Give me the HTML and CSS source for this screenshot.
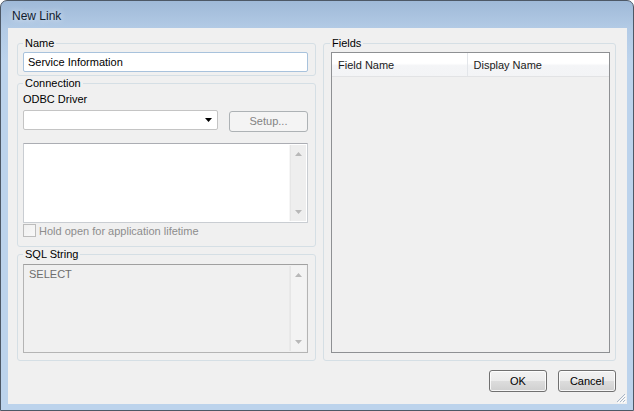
FILE: index.html
```html
<!DOCTYPE html>
<html>
<head>
<meta charset="utf-8">
<link rel="stylesheet" href="styles.css">
</head>
<body>
<div class="window">
  <div class="titlebar"><span class="title">New Link</span></div>
  <div class="client">
    <div class="columns">
      <div class="leftcol">
        <fieldset class="group name-group">
          <legend>Name</legend>
          <div class="textbox">Service Information</div>
        </fieldset>
        <fieldset class="group conn-group">
          <legend>Connection</legend>
          <div class="label">ODBC Driver</div>
          <div class="driver-row">
            <div class="combo">
              <svg class="combo-arrow" width="7" height="4" viewBox="0 0 7 4"><path d="M0 0H7L3.5 4Z" fill="#000"/></svg>
            </div>
            <div class="btn btn-disabled setup">Setup...</div>
          </div>
          <div class="listbox">
            <div class="scrollbar">
              <svg width="7" height="4" viewBox="0 0 7 4"><path d="M3.5 0L7 4H0Z" fill="#b8b8b8"/></svg>
              <svg width="7" height="4" viewBox="0 0 7 4"><path d="M0 0H7L3.5 4Z" fill="#b8b8b8"/></svg>
            </div>
          </div>
          <div class="check">
            <span class="checkbox"></span>
            <span class="check-label">Hold open for application lifetime</span>
          </div>
        </fieldset>
        <fieldset class="group sql-group">
          <legend>SQL String</legend>
          <div class="sqlbox">
            <div class="sql-text">SELECT</div>
            <div class="scrollbar">
              <svg width="7" height="4" viewBox="0 0 7 4"><path d="M3.5 0L7 4H0Z" fill="#b8b8b8"/></svg>
              <svg width="7" height="4" viewBox="0 0 7 4"><path d="M0 0H7L3.5 4Z" fill="#b8b8b8"/></svg>
            </div>
          </div>
        </fieldset>
      </div>
      <fieldset class="group fields-group">
        <legend>Fields</legend>
        <div class="listview">
          <div class="lv-header">
            <div class="lv-col lv-col1">Field Name</div>
            <div class="lv-col lv-col2">Display Name</div>
            <div class="lv-col lv-rest"></div>
          </div>
        </div>
      </fieldset>
    </div>
    <div class="buttons">
      <div class="btn">OK</div>
      <div class="btn">Cancel</div>
    </div>
  </div>
  <svg class="grip" width="11" height="11" viewBox="0 0 11 11">
    <path d="M10 2L2 10M10 5L5 10M10 8L8 10" stroke="#a9b6c6" stroke-width="1"/>
    <path d="M11 3L3 11M11 6L6 11M11 9L9 11" stroke="#ffffff" stroke-width="1"/>
  </svg>
</div>
</body>
</html>
```

FILE: styles.css
```css
* { box-sizing: border-box; }
html, body { margin: 0; padding: 0; }
body {
  width: 634px;
  height: 411px;
  background: #ffffff;
  font-family: "Liberation Sans", Arial, sans-serif;
  font-size: 11px;
  line-height: 13px;
  color: #000;
  overflow: hidden;
}
.window {
  position: relative;
  width: 634px;
  height: 411px;
  border: 1px solid #4d5866;
  border-radius: 7px 7px 0 0;
  background: linear-gradient(#9fb9d8 0px, #b3cbe6 28px, #bcd3ec 60px, #bcd3ec 100%);
  padding: 0 6px 6px 7px;
  display: flex;
  flex-direction: column;
}
.titlebar {
  height: 27px;
  display: flex;
  align-items: center;
  padding-left: 4px;
  padding-top: 4px;
}
.title {
  font-size: 12px;
  color: #10202f;
  text-shadow: 0 0 6px rgba(255,255,255,0.9);
}
.client {
  width: 619px;
  height: 376px;
  background: #f0f0f0;
  padding: 9px 11px 12px 9px;
  display: flex;
  flex-direction: column;
}
.columns {
  display: flex;
  gap: 7px;
  height: 324px;
}
.leftcol {
  width: 299px;
  display: flex;
  flex-direction: column;
  gap: 1px;
}
.group {
  margin: 0;
  border: 1px solid #d5dfe5;
  border-radius: 3px;
  min-width: 0;
}
.group legend {
  padding: 0 2px;
  line-height: 13px;
  color: #000;
}
.name-group { padding: 2px 7px 3px 5px; }
.conn-group { padding: 3px 7px 9px 5px; }
.sql-group { padding: 3px 7px 7px 5px; }
.fields-group {
  width: 293px;
  padding: 2px 5px 7px 7px;
}
.fields-group legend { margin-left: -1px; }

.textbox {
  height: 20px;
  border: 1px solid #a8c2dc;
  border-radius: 2px;
  background: #fff;
  padding: 3px 4px;
}
.label { height: 13px; margin-bottom: 4px; }
.driver-row {
  display: flex;
  gap: 11px;
  height: 22px;
  align-items: flex-start;
}
.combo {
  width: 195px;
  height: 20px;
  border: 1px solid #c4c4c4;
  border-radius: 2px;
  background: #fff;
  display: flex;
  align-items: center;
  justify-content: flex-end;
  padding-right: 5px;
}
.btn {
  width: 58px;
  height: 22px;
  border: 1px solid #707070;
  border-radius: 3px;
  background: linear-gradient(#f2f2f2 0%, #ebebeb 50%, #dddddd 50%, #cfcfcf 100%);
  box-shadow: inset 0 0 0 1px rgba(255,255,255,0.8);
  display: flex;
  align-items: center;
  justify-content: center;
}
.btn-disabled {
  border-color: #adb2b5;
  background: #f4f4f4;
  box-shadow: none;
  color: #838383;
}
.setup {
  width: 79px;
  height: 21px;
  margin-top: 1px;
}
.listbox {
  margin-top: 11px;
  height: 80px;
  border: 1px solid #c9cdd2;
  border-top-color: #abadb3;
  border-radius: 1px;
  background: #fff;
  display: flex;
  justify-content: flex-end;
  padding: 1px;
}
.scrollbar {
  width: 17px;
  background: #eeeeee;
  border-left: 1px solid #f6f6f6;
  box-shadow: inset 1px 0 0 #e6e6e6;
  display: flex;
  flex-direction: column;
  justify-content: space-between;
  align-items: center;
  padding: 7px 0 7px 1px;
}
.check {
  margin-top: 1px;
  height: 13px;
  display: flex;
  align-items: center;
  gap: 3px;
}
.checkbox {
  width: 13px;
  height: 13px;
  border: 1px solid #bcbcbc;
  background: linear-gradient(135deg, #f0f0f0, #f8f8f8);
}
.check-label { color: #8d8d8d; padding-top: 2px; }
.sqlbox {
  height: 89px;
  border: 1px solid #b4b4b4;
  border-top-color: #a0a0a0;
  background: #f0f0f0;
  display: flex;
  padding: 1px;
}
.sql-text {
  flex: 1;
  color: #6d6d6d;
  padding: 2px 4px;
}
.sqlbox .scrollbar { background: #f3f3f3; border-left-color: #e9e9e9; }

.listview {
  height: 301px;
  border: 1px solid #8e9093;
  background: #f0f0f0;
}
.lv-header {
  display: flex;
  height: 24px;
  border-bottom: 1px solid #e2e3e5;
  background: linear-gradient(#ffffff 0%, #ffffff 45%, #f4f5f7 55%, #f3f4f6 100%);
}
.lv-col {
  padding-left: 6px;
  padding-top: 2px;
  display: flex;
  align-items: center;
  color: #1b1b1b;
}
.lv-col1 { width: 137px; border-right: 1px solid #e3e6ea; }
.lv-col2 { width: 137px; }
.lv-rest { flex: 1; }

.buttons {
  margin-top: 9px;
  display: flex;
  justify-content: flex-end;
  gap: 11px;
}
.grip {
  position: absolute;
  right: 7px;
  bottom: 7px;
}
```
